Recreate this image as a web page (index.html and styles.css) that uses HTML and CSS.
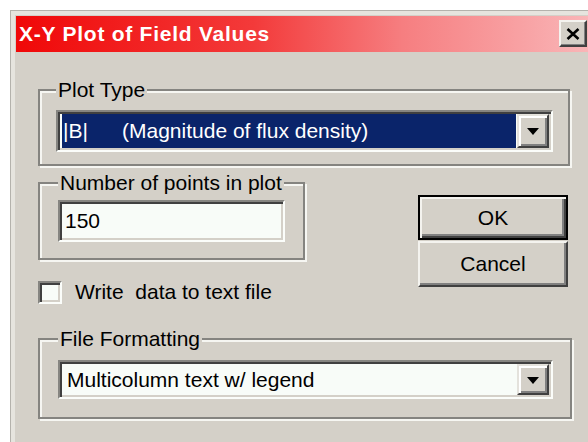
FILE: index.html
```html
<!DOCTYPE html>
<html>
<head>
<meta charset="utf-8">
<title>X-Y Plot of Field Values</title>
<link rel="stylesheet" href="styles.css">
</head>
<body>
<div class="window">
  <div class="titlebar">
    <span class="title">X-Y Plot of Field Values</span>
    <button class="close" type="button" aria-label="Close">
      <svg width="14" height="12" viewBox="0 0 14 12"><path d="M1.5 1 L12.5 11 M12.5 1 L1.5 11" stroke="#000" stroke-width="2.6" fill="none"/></svg>
    </button>
  </div>
  <div class="client">
    <fieldset class="group group-plot">
      <legend>Plot Type</legend>
      <div class="combo">
        <div class="field selected"><span class="abbr">|B|</span><span>(Magnitude of flux density)</span></div>
        <span class="drop"><svg width="12" height="7" viewBox="0 0 12 7"><path d="M0 0 H12 L6 7 Z" fill="#000"/></svg></span>
      </div>
    </fieldset>

    <div class="middle">
      <div class="left-col">
        <fieldset class="group group-points">
          <legend>Number of points in plot</legend>
          <div class="edit">150</div>
        </fieldset>
        <label class="check"><span class="box"></span><span>Write&nbsp; data to text file</span></label>
      </div>
      <div class="buttons">
        <button class="btn btn-default" type="button">OK</button>
        <button class="btn" type="button">Cancel</button>
      </div>
    </div>

    <fieldset class="group group-file">
      <legend>File Formatting</legend>
      <div class="combo combo-short">
        <div class="field">Multicolumn text w/ legend</div>
        <span class="drop"><svg width="12" height="7" viewBox="0 0 12 7"><path d="M0 0 H12 L6 7 Z" fill="#000"/></svg></span>
      </div>
    </fieldset>
  </div>
</div>
</body>
</html>
```
FILE: styles.css
```css
html, body {
  margin: 0;
  padding: 0;
  background: #ffffff;
}

body {
  font-family: "Liberation Sans", Arial, sans-serif;
  font-size: 21px;
  color: #000;
  overflow: hidden;
}

.window {
  margin: 10px 0 0 10px;
  width: 600px;
  height: 440px;
  box-sizing: border-box;
  background: #d4d0c8;
  border-top: 1px solid #b4b2ac;
  border-left: 1px solid #b4b2ac;
  box-shadow: inset 4px 4px 0 #e6e4de;
  padding: 5px 0 0 5px;
}

/* caption bar */
.titlebar {
  height: 36px;
  display: flex;
  align-items: flex-start;
  background: linear-gradient(to right, #f00808 0%, #f33a3a 40%, #f67e80 65%, #f9b3b5 95%, #fbbcbe 100%);
}

.title {
  flex: 1;
  padding-left: 3px;
  line-height: 36px;
  color: #fff;
  font-weight: bold;
  font-size: 21px;
  letter-spacing: 0.75px;
  white-space: nowrap;
}

.close {
  margin: 4px 23px 0 0;
  width: 28px;
  height: 27px;
  padding: 0;
  display: flex;
  align-items: center;
  justify-content: center;
  background: #d4d0c8;
  border: 2px solid;
  border-color: #f4f3ef #404040 #404040 #f4f3ef;
  box-shadow: inset -1px -1px 0 #808080;
}

/* dialog client area */
.client {
  padding: 26px 0 0 22px;
}

.group {
  margin: 0;
  box-sizing: border-box;
  border: 2px solid #858480;
  box-shadow: inset 2px 2px 0 #f6f6f2, 2px 2px 0 #f6f6f2;
  min-width: 0;
}

.group legend {
  padding: 0 2px;
  margin: 0;
  line-height: 24px;
  background: #d4d0c8;
  white-space: nowrap;
}

.group-plot {
  width: 532px;
  padding: 8px 15px 12px 16px;
}

.group-points {
  width: 267px;
  padding: 5px 18px 16px 18px;
}

.group-file {
  width: 534px;
  margin-top: 23px;
  padding: 9px 17px 18px 18px;
}

/* sunken field frame shared by combo and edit */
.combo,
.edit {
  box-sizing: border-box;
  border: 2px solid;
  border-color: #868581 #fbfdfa #fbfdfa #868581;
  box-shadow: inset 2px 2px 0 #404040, inset -2px -2px 0 #d4d0c8;
  background: #f8fcf8;
}

.combo {
  height: 42px;
  padding: 2px;
  display: flex;
}

.combo-short {
  height: 39px;
}

.field {
  flex: 1;
  display: flex;
  align-items: center;
  padding-left: 5px;
  white-space: nowrap;
}

.field.selected {
  margin: 0 1px 0 2px;
  padding-left: 1px;
  background: #0a246a;
  color: #fff;
}

.abbr {
  width: 59px;
}

.drop {
  width: 32px;
  box-sizing: border-box;
  display: flex;
  align-items: center;
  justify-content: center;
  background: #d4d0c8;
  border: 2px solid;
  border-color: #e4e2dc #404040 #404040 #e4e2dc;
  box-shadow: inset 2px 2px 0 #fff, inset -2px -2px 0 #808080;
}

.drop svg {
  margin-top: 1px;
}

.edit {
  height: 42px;
  display: flex;
  align-items: center;
  padding-left: 5px;
}

.middle {
  margin-top: 5px;
  width: 533px;
  display: flex;
  justify-content: space-between;
  align-items: flex-start;
}

.left-col {
  display: flex;
  flex-direction: column;
}

.buttons {
  margin: 24px 3px 0 0;
  width: 150px;
  display: flex;
  flex-direction: column;
  gap: 1px;
}

.btn {
  font: inherit;
  color: #000;
  background: #d4d0c8;
  padding: 0;
  box-sizing: border-box;
  border: 2px solid;
  border-color: #f4f3ef #404040 #404040 #f4f3ef;
  box-shadow: inset -2px -2px 0 #808080;
  height: 46px;
}

.btn-default {
  height: 45px;
  border: 2px solid #000;
  box-shadow: inset 2px 2px 0 #f4f3ef, inset -2px -2px 0 #404040, inset -4px -4px 0 #808080;
}

/* checkbox row */
.check {
  margin-top: 20px;
  display: flex;
  align-items: center;
  gap: 13px;
  white-space: pre;
}

.box {
  width: 24px;
  height: 23px;
  box-sizing: border-box;
  border: 2px solid;
  border-color: #868581 #fbfdfa #fbfdfa #868581;
  box-shadow: inset 2px 2px 0 #404040, inset -2px -2px 0 #d4d0c8;
  background: #f8fcf8;
}
```
